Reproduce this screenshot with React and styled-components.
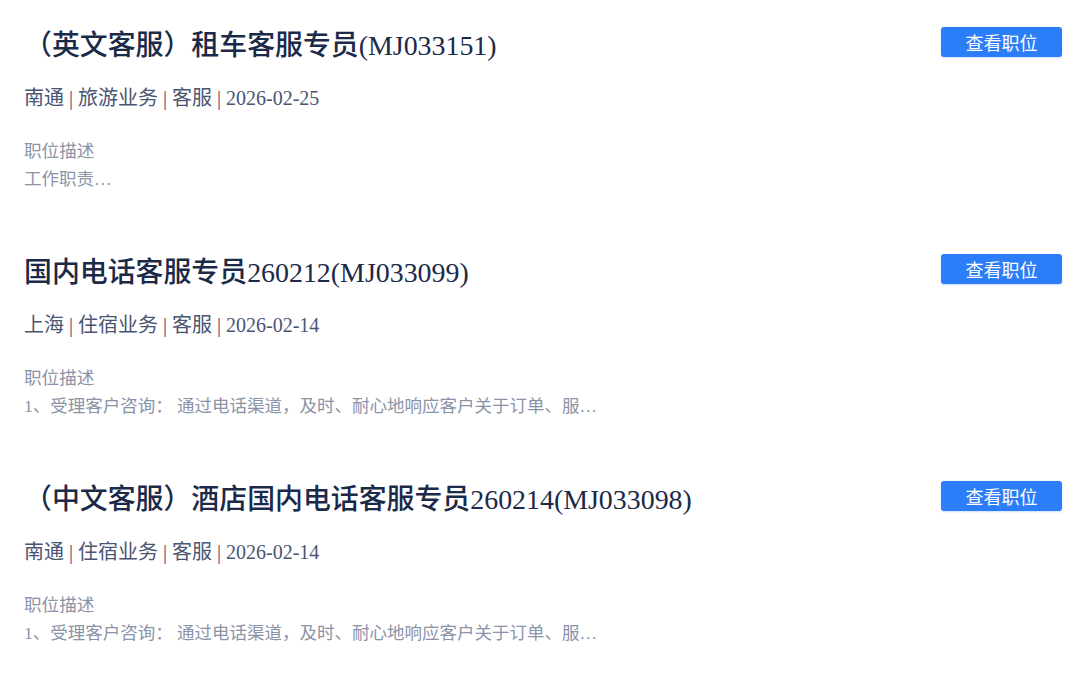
import React from "react";
import styled, { createGlobalStyle } from "styled-components";

const Global = createGlobalStyle`
  html, body { margin: 0; padding: 0; background: #ffffff; }
  body { font-family: "Liberation Serif", "Noto Sans CJK SC", serif; }
`;

const List = styled.div`
  display: flex;
  flex-direction: column;
  gap: 60px;
  padding: 26px 18px 0 24px;
`;

const Entry = styled.section`
  display: flex;
  flex-direction: column;
`;

const Header = styled.div`
  display: flex;
  align-items: flex-start;
  justify-content: space-between;
`;

const Title = styled.h2`
  margin: 0;
  font-size: 27.9px;
  line-height: 40px;
  font-weight: 500;
  color: #1b2a48;
  white-space: nowrap;
`;

const ViewButton = styled.button`
  margin-top: 1px;
  width: 121px;
  height: 30px;
  border: none;
  border-radius: 3px;
  background: #2b7ef8;
  color: #ffffff;
  font-family: "Noto Sans CJK SC", sans-serif;
  font-size: 18px;
  line-height: 30px;
  padding: 0;
  box-shadow: 0 1px 2px rgba(43, 126, 248, 0.25);
  cursor: pointer;
`;

const Meta = styled.div`
  margin-top: 18px;
  font-size: 20px;
  line-height: 29px;
  color: #4a5572;
`;

const DescLabel = styled.div`
  margin-top: 24px;
  font-size: 17.6px;
  line-height: 28px;
  color: #8a93a7;
`;

const DescText = styled.div`
  font-size: 17.5px;
  line-height: 28px;
  color: #8a93a7;
`;

const jobs = [
  {
    title: "（英文客服）租车客服专员(MJ033151)",
    meta: "南通 | 旅游业务 | 客服 | 2026-02-25",
    desc: "工作职责…",
  },
  {
    title: "国内电话客服专员260212(MJ033099)",
    meta: "上海 | 住宿业务 | 客服 | 2026-02-14",
    desc: "1、受理客户咨询： 通过电话渠道，及时、耐心地响应客户关于订单、服…",
  },
  {
    title: "（中文客服）酒店国内电话客服专员260214(MJ033098)",
    meta: "南通 | 住宿业务 | 客服 | 2026-02-14",
    desc: "1、受理客户咨询： 通过电话渠道，及时、耐心地响应客户关于订单、服…",
  },
];

export default function App() {
  return (
    <>
      <Global />
      <List>
        {jobs.map((job) => (
          <Entry key={job.title}>
            <Header>
              <Title>{job.title}</Title>
              <ViewButton>查看职位</ViewButton>
            </Header>
            <Meta>{job.meta}</Meta>
            <DescLabel>职位描述</DescLabel>
            <DescText>{job.desc}</DescText>
          </Entry>
        ))}
      </List>
    </>
  );
}
